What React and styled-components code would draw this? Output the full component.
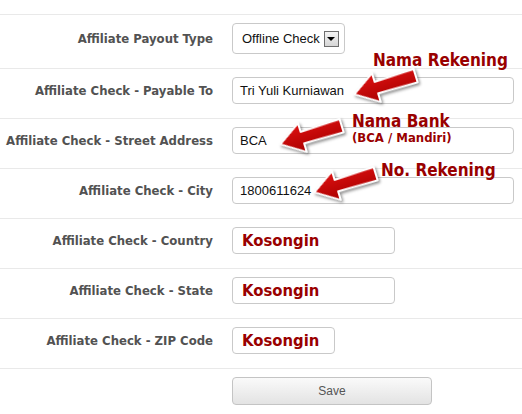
import React from "react";
import styled, { createGlobalStyle } from "styled-components";

const GlobalStyle = createGlobalStyle`
  html, body {
    margin: 0;
    padding: 0;
    background: #ffffff;
  }
  body {
    font-family: "Liberation Sans", Arial, sans-serif;
  }
`;

const Page = styled.div`
  width: 522px;
  height: 414px;
  overflow: hidden;
  padding-top: 14px;
  box-sizing: border-box;
`;

const Row = styled.div`
  position: relative;
  display: grid;
  grid-template-columns: 213px 1fr;
  column-gap: 19px;
  align-items: center;
  border-top: 1px solid #e9e9e9;
  padding: 8px 0 14px;
  min-height: ${p => (p.$tall ? "31px" : "27px")};
`;

const Label = styled.div`
  text-align: right;
  font-family: "DejaVu Sans Condensed", "DejaVu Sans", sans-serif;
  font-stretch: condensed;
  font-weight: bold;
  font-size: 13px;
  color: #525252;
  white-space: nowrap;
`;

const Field = styled.div`
  width: ${p => p.$width}px;
  height: 27px;
  box-sizing: border-box;
  border: 1px solid #c9c9c9;
  border-radius: 4px;
  background: #fff;
  display: flex;
  align-items: center;
  padding-left: 7px;
  font-size: 13px;
  color: #111;
`;

const Empty = styled.span`
  font-family: "DejaVu Sans Condensed", "DejaVu Sans", sans-serif;
  font-stretch: condensed;
  font-weight: bold;
  font-size: 16.5px;
  color: #990000;
  padding-left: 2px;
`;

const SelectBox = styled.div`
  width: 113px;
  height: 31px;
  box-sizing: border-box;
  border: 1px solid #c9c9c9;
  border-radius: 4px;
  display: flex;
  align-items: center;
  padding-left: 9px;
  font-size: 13px;
  color: #111;
  gap: 4px;
`;

const DropButton = styled.span`
  width: 15px;
  height: 16px;
  box-sizing: border-box;
  border: 1px solid #6e6e6e;
  background: linear-gradient(#f4f4f4, #d6d6d6);
  display: flex;
  align-items: center;
  justify-content: center;
  &::after {
    content: "";
    border-left: 4px solid transparent;
    border-right: 4px solid transparent;
    border-top: 4px solid #000;
  }
`;

const SaveButton = styled.button`
  width: 200px;
  height: 28px;
  border: 1px solid #c4c4c4;
  border-radius: 4px;
  background: linear-gradient(#fafafa, #e3e3e3);
  font-family: "Liberation Sans", Arial, sans-serif;
  font-size: 12px;
  color: #555;
  padding: 0;
`;

const Note = styled.div`
  position: absolute;
  left: ${p => p.$left}px;
  top: ${p => p.$top}px;
  font-family: "DejaVu Sans Condensed", "DejaVu Sans", sans-serif;
  font-stretch: condensed;
  font-weight: bold;
  font-size: ${p => p.$size || 17}px;
  line-height: 1;
  color: #990000;
  white-space: nowrap;
  z-index: 2;
`;

const ArrowSvg = styled.svg`
  position: absolute;
  left: ${p => p.$left}px;
  top: ${p => p.$top}px;
  transform: rotate(-17deg);
  overflow: visible;
  z-index: 3;
  filter: drop-shadow(1px 2px 1.5px rgba(0, 0, 0, 0.45));
`;

function Arrow({ left, top }) {
  return (
    <ArrowSvg $left={left} $top={top} width="68" height="34" viewBox="0 0 68 34">
      <defs>
        <linearGradient id="redfill" x1="0" y1="0" x2="0" y2="1">
          <stop offset="0" stopColor="#dd1111" />
          <stop offset="1" stopColor="#aa0000" />
        </linearGradient>
      </defs>
      <path
        d="M2 17 L25 2 L25 11 L66 10 L66 24 L25 23 L25 32 Z"
        fill="url(#redfill)"
        stroke="#ffffff"
        strokeWidth="2"
        strokeLinejoin="round"
      />
    </ArrowSvg>
  );
}

const rows = [
  { label: "Affiliate Check - Country", width: 163 },
  { label: "Affiliate Check - State", width: 163 },
  { label: "Affiliate Check - ZIP Code", width: 103 }
];

export default function App() {
  return (
    <Page>
      <GlobalStyle />
      <Row $tall>
        <Label>Affiliate Payout Type</Label>
        <SelectBox>
          Offline Check
          <DropButton />
        </SelectBox>
      </Row>
      <Row>
        <Note $left={373} $top={-17}>Nama Rekening</Note>
        <Arrow left={351} top={-1} />
        <Label>Affiliate Check - Payable To</Label>
        <Field $width={282}>Tri Yuli Kurniawan</Field>
      </Row>
      <Row>
        <Note $left={352} $top={-6}>Nama Bank</Note>
        <Note $left={352} $top={12} $size={13}>(BCA / Mandiri)</Note>
        <Arrow left={277} top={-1} />
        <Label>Affiliate Check - Street Address</Label>
        <Field $width={282}>BCA</Field>
      </Row>
      <Row>
        <Note $left={381} $top={-7}>No. Rekening</Note>
        <Arrow left={311} top={-3} />
        <Label>Affiliate Check - City</Label>
        <Field $width={282}>1800611624</Field>
      </Row>
      {rows.map(r => (
        <Row key={r.label}>
          <Label>{r.label}</Label>
          <Field $width={r.width}>
            <Empty>Kosongin</Empty>
          </Field>
        </Row>
      ))}
      <Row>
        <span />
        <SaveButton>Save</SaveButton>
      </Row>
    </Page>
  );
}
